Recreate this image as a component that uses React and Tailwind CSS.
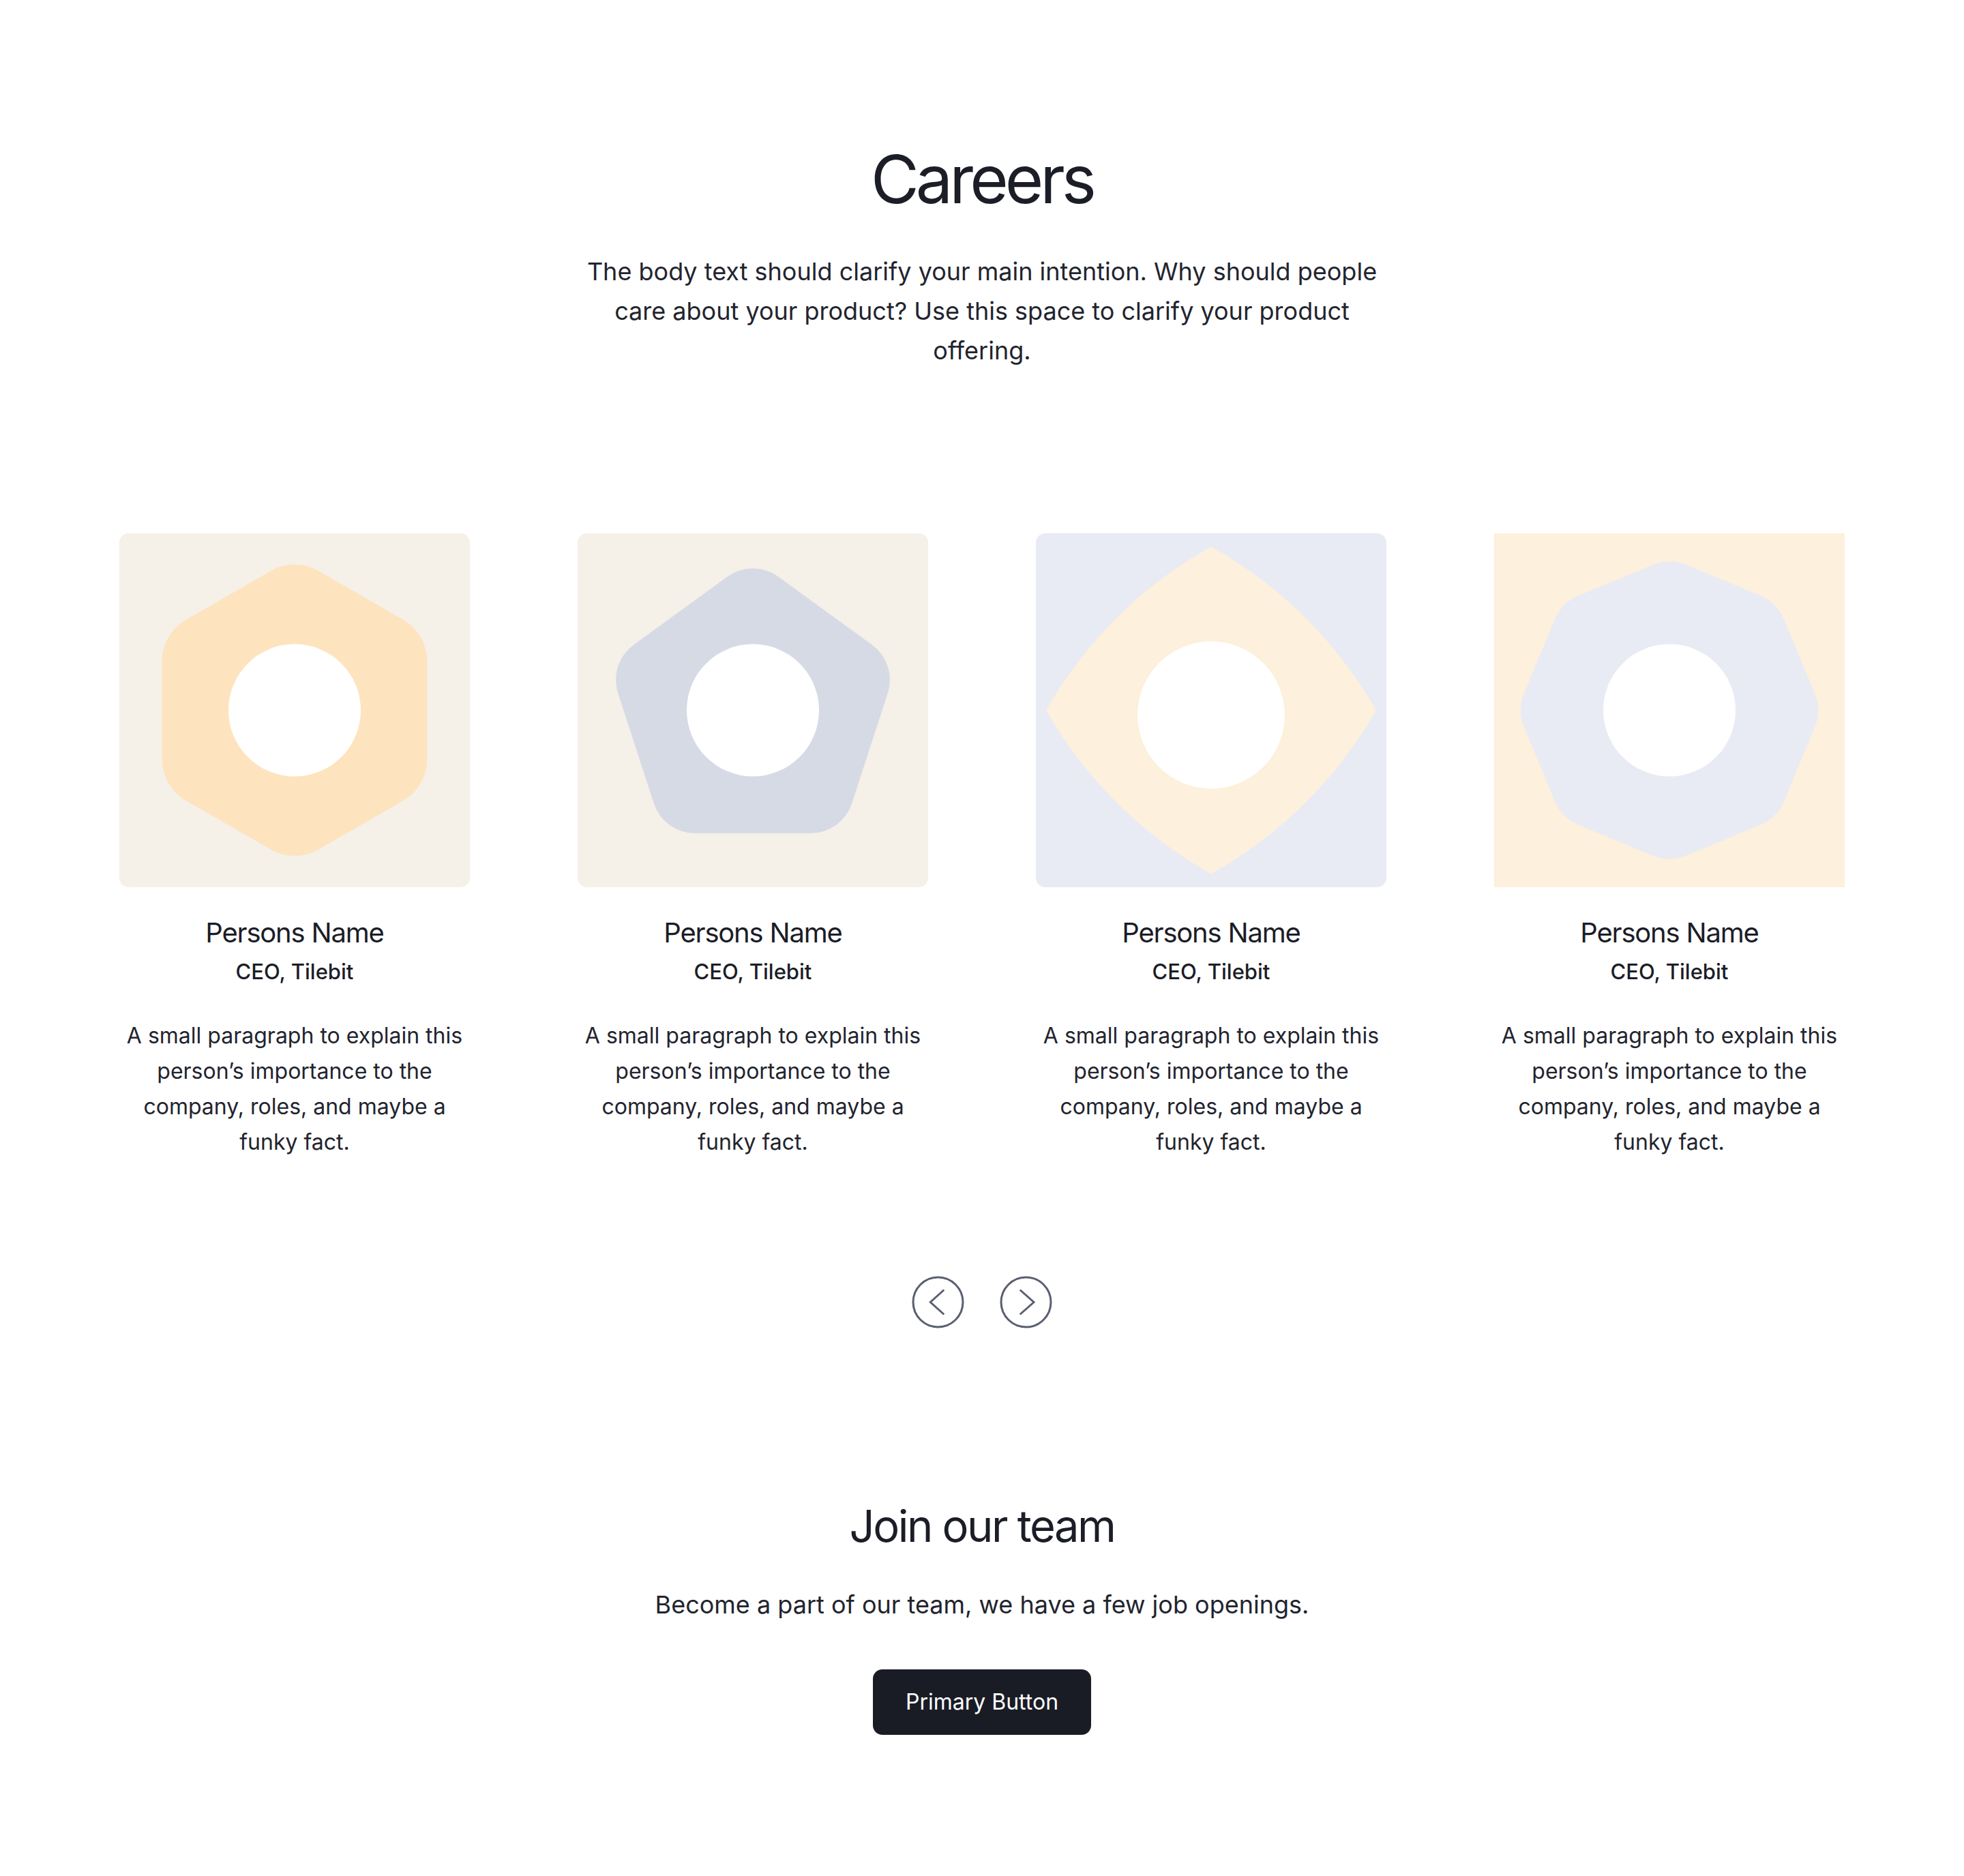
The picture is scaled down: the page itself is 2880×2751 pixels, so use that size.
import React from 'react';

// --- DATA ---
const people = [
  {
    bg: 'bg-[#f5f0e8] rounded-[14px]',
    shape: (
      <>
        <polygon
          points="257,115.8 381.4,187.65 381.4,331.35 257,403.2 132.6,331.35 132.6,187.65"
          fill="#fde4bf" stroke="#fde4bf" strokeWidth="140" strokeLinejoin="round"
        />
        <circle cx="257" cy="259.5" r="97" fill="#ffffff" />
      </>
    ),
  },
  {
    bg: 'bg-[#f5f0e8] rounded-[14px]',
    shape: (
      <>
        <polygon
          points="257,114.5 394.9,214.7 342.2,376.8 171.8,376.8 119.1,214.7"
          fill="#d6dae5" stroke="#d6dae5" strokeWidth="126" strokeLinejoin="round"
        />
        <circle cx="257" cy="259.5" r="97" fill="#ffffff" />
      </>
    ),
  },
  {
    bg: 'bg-[#e8ebf3] rounded-[14px]',
    shape: (
      <>
        <path
          d="M257 19.5 Q410.5 106 499 259.5 Q410.5 413 257 499.5 Q103.5 413 15 259.5 Q103.5 106 257 19.5 Z"
          fill="#fdf0dc"
        />
        <circle cx="257" cy="266.5" r="108" fill="#ffffff" />
      </>
    ),
  },
  {
    bg: 'bg-[#fdf0dc]',
    shape: (
      <>
        <polygon
          points="257,106.5 365.2,151.3 410,259.5 365.2,367.7 257,412.5 148.8,367.7 104,259.5 148.8,151.3"
          fill="#e8ebf3" stroke="#e8ebf3" strokeWidth="130" strokeLinejoin="round"
        />
        <circle cx="257" cy="259.5" r="97" fill="#ffffff" />
      </>
    ),
  },
];

const PersonCard = ({ bg, shape }) => (
  <div className="w-[514px] flex flex-col items-center text-center">
    <div className={`w-[514px] h-[519px] overflow-hidden ${bg}`}>
      <svg width="514" height="519" viewBox="0 0 514 519">{shape}</svg>
    </div>
    <h3 className="mt-[43px] text-[40px] leading-[48px] font-normal tracking-[-1.2px] text-[#1b1d27]">Persons Name</h3>
    <p className="mt-[13px] text-[31px] leading-[40px] font-medium text-[#1b1d27]">CEO, Tilebit</p>
    <p className="mt-[48px] text-[32px] leading-[52px] text-[#22242e]">
      A small paragraph to explain this person’s importance to the company, roles, and maybe a funky fact.
    </p>
  </div>
);

const ArrowButton = ({ dir }) => (
  <button className="w-[77px] h-[77px] flex items-center justify-center">
    <svg width="77" height="77" viewBox="0 0 77 77" fill="none" stroke="#5a5f70" strokeWidth="3">
      <circle cx="38.5" cy="38.5" r="36.5" />
      {dir === 'left' ? (
        <polyline points="47.3,20.5 27.3,38.5 47.3,56.5" />
      ) : (
        <polyline points="29.7,20.5 50,38.5 29.7,56.5" />
      )}
    </svg>
  </button>
);

const App = () => {
  return (
    <div className="w-full min-h-[2751px] bg-white font-['Inter',sans-serif] text-[#1b1d27]">
      <section className="flex flex-col items-center pt-[205px] pb-[208px]">
        {/* Header */}
        <h1 className="text-[97px] leading-[116px] font-normal tracking-[-5px]">Careers</h1>
        <p className="mt-[48px] w-[1170px] text-center text-[36px] leading-[58px] text-[#22242e]">
          The body text should clarify your main intention. Why should people care about your product? Use this space to clarify your product offering.
        </p>

        {/* Team */}
        <div className="mt-[239px] flex gap-[158px]">
          {people.map((p, i) => (
            <PersonCard key={i} bg={p.bg} shape={p.shape} />
          ))}
        </div>

        {/* Carousel controls */}
        <div className="mt-[170px] flex gap-[52px]">
          <ArrowButton dir="left" />
          <ArrowButton dir="right" />
        </div>

        {/* Join */}
        <h2 className="mt-[251px] text-[65px] leading-[78px] font-normal tracking-[-2.5px]">Join our team</h2>
        <p className="mt-[47px] text-[36px] leading-[58px] text-[#22242e]">
          Become a part of our team, we have a few job openings.
        </p>
        <button className="mt-[66px] w-[320px] h-[96px] rounded-[14px] bg-[#1a1c25] text-white text-[32px] font-normal">
          Primary Button
        </button>
      </section>
    </div>
  );
};

export default App;
